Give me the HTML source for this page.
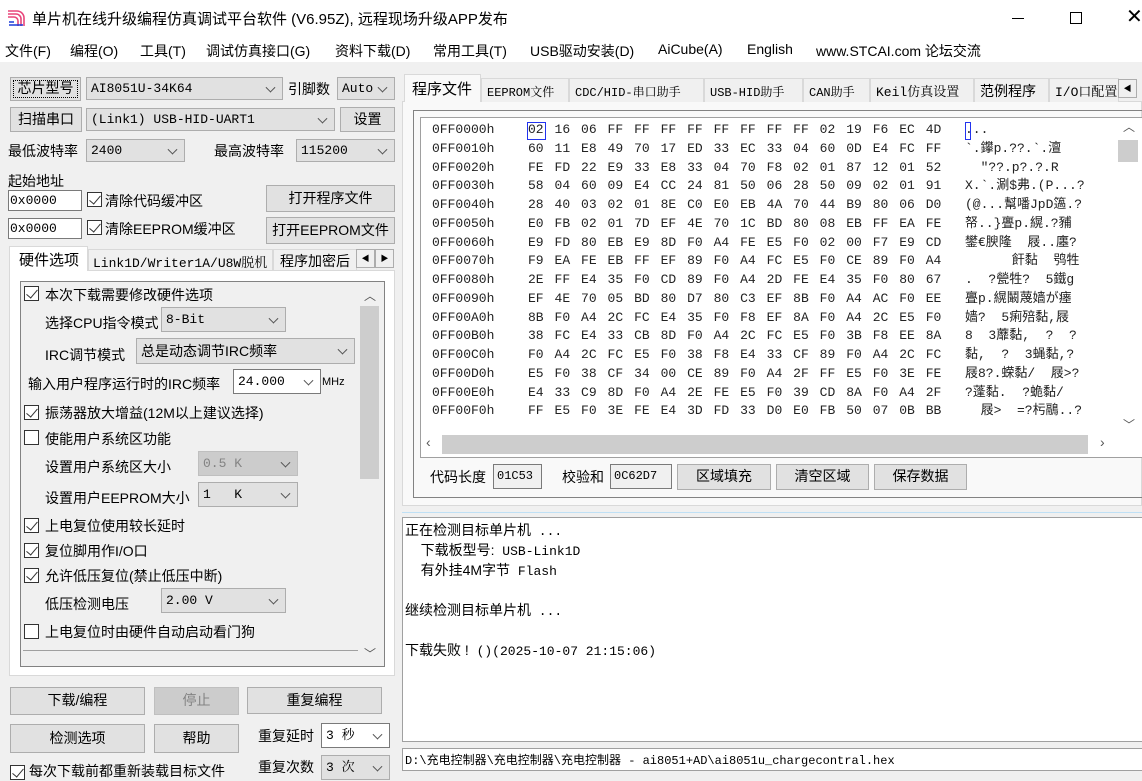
<!DOCTYPE html>
<html><head><meta charset="utf-8">
<style>
*{box-sizing:border-box;margin:0;padding:0}
body{width:1142px;height:776px;overflow:hidden;background:#f0f0f0;position:relative;font-family:"Liberation Sans","Noto Sans CJK SC",sans-serif;font-size:14px;color:#000}
.a{position:absolute;white-space:nowrap}
.btn{position:absolute;background:#e1e1e1;border:1px solid #adadad;text-align:center;font-size:14px}
.cb{position:absolute;background:#e1e1e1;border:1px solid #adadad;font-family:"Liberation Mono","Noto Serif CJK SC",monospace;font-size:13px;padding-left:4px}
.cb.w{background:#fff;border-color:#7a7a7a}
.cb.d{background:#ccc;border-color:#bfbfbf;color:#838383}
.cb:after{content:"";position:absolute;right:8px;top:50%;width:6px;height:6px;border-right:1px solid #555;border-bottom:1px solid #555;transform:translateY(-70%) rotate(45deg)}
.inp{position:absolute;background:#fff;border:1px solid #7a7a7a;font-family:"Liberation Mono",monospace;font-size:13px;padding-left:1px}
.chk{position:absolute;width:15px;height:15px;border:1px solid #333;background:#fff}
.chk.on:after{content:"";position:absolute;left:4px;top:0px;width:5px;height:10px;border-right:1.5px solid #333;border-bottom:1.5px solid #333;transform:rotate(40deg)}
.m{font-family:"Liberation Mono","Noto Serif CJK SC",monospace}
.tab{position:absolute;top:78px;height:24px;border:1px solid #d9d9d9;border-bottom:none;background:#f0f0f0;font-size:13px;padding:2px 5px 0;white-space:nowrap}
.hx{position:absolute;font-family:"Liberation Mono",monospace;font-size:13px;color:#222;white-space:pre;line-height:18.75px}
.hx span{display:inline-block;width:26.53px}
.lg div{height:20px;line-height:20px;white-space:pre;font-family:"Liberation Mono","Noto Sans CJK SC",monospace;font-size:13px}
.lg b{font-weight:normal;font-family:"Liberation Sans","Noto Sans CJK SC",sans-serif;font-size:14px}
</style></head><body>
<div class="a" style="left:0;top:0;width:1142px;height:36px;background:#fff"></div>
<svg class="a" style="left:6px;top:8px" width="20" height="20" viewBox="0 0 20 20"><g fill="none" stroke="#e8457a" stroke-width="1.6"><path d="M2 3h9a7 7 0 0 1 7 7v8"/><path d="M2 6h8a5 5 0 0 1 5 5v7"/><path d="M2 9h6a4 4 0 0 1 4 4v5"/></g><g stroke="#1c3bd8" stroke-width="1.6"><path d="M3 14h5M3 17h14"/></g></svg>
<div class="a" style="left:32px;top:8px;font-size:15px">单片机在线升级编程仿真调试平台软件 (V6.95Z), 远程现场升级APP发布</div>
<div class="a" style="left:1012px;top:18px;width:12px;height:1px;background:#000"></div>
<div class="a" style="left:1070px;top:12px;width:12px;height:12px;border:1px solid #000"></div>
<div class="a" style="left:1126px;top:4px;font-size:20px;font-weight:300">✕</div>
<div class="a" style="left:0;top:36px;width:1142px;height:26px;background:#fff"></div>
<div class="a" style="left:5px;top:41px">文件(F)</div>
<div class="a" style="left:70px;top:41px">编程(O)</div>
<div class="a" style="left:140px;top:41px">工具(T)</div>
<div class="a" style="left:206px;top:41px">调试仿真接口(G)</div>
<div class="a" style="left:335px;top:41px">资料下载(D)</div>
<div class="a" style="left:433px;top:41px">常用工具(T)</div>
<div class="a" style="left:530px;top:41px">USB驱动安装(D)</div>
<div class="a" style="left:658px;top:41px">AiCube(A)</div>
<div class="a" style="left:747px;top:41px">English</div>
<div class="a" style="left:816px;top:41px">www.STCAI.com 论坛交流</div>

<div class="btn" style="left:10px;top:77px;width:71px;height:24px;line-height:21px;outline:1px dotted #000;outline-offset:-4px">芯片型号</div>
<div class="cb" style="left:86px;top:77px;width:197px;height:23px;line-height:21px">AI8051U-34K64</div>
<div class="a" style="left:288px;top:79px">引脚数</div>
<div class="cb" style="left:337px;top:77px;width:58px;height:23px;line-height:21px">Auto</div>
<div class="btn" style="left:10px;top:107px;width:72px;height:25px;line-height:22px">扫描串口</div>
<div class="cb" style="left:86px;top:108px;width:249px;height:23px;line-height:21px">(Link1) USB-HID-UART1</div>
<div class="btn" style="left:340px;top:107px;width:55px;height:25px;line-height:22px">设置</div>
<div class="a" style="left:8px;top:141px">最低波特率</div>
<div class="cb" style="left:86px;top:139px;width:99px;height:23px;line-height:21px">2400</div>
<div class="a" style="left:214px;top:141px">最高波特率</div>
<div class="cb" style="left:296px;top:139px;width:99px;height:23px;line-height:21px">115200</div>
<div class="a" style="left:8px;top:171px">起始地址</div>
<div class="inp" style="left:8px;top:190px;width:74px;height:21px;line-height:19px">0x0000</div>
<div class="chk on" style="left:87px;top:192px"></div>
<div class="a" style="left:105px;top:191px">清除代码缓冲区</div>
<div class="btn" style="left:266px;top:185px;width:129px;height:27px;line-height:24px">打开程序文件</div>
<div class="inp" style="left:8px;top:218px;width:74px;height:21px;line-height:19px">0x0000</div>
<div class="chk on" style="left:87px;top:220px"></div>
<div class="a" style="left:105px;top:219px">清除EEPROM缓冲区</div>
<div class="btn" style="left:266px;top:217px;width:129px;height:27px;line-height:24px">打开EEPROM文件</div>
<div class="a" style="left:9px;top:270px;width:386px;height:406px;background:#fff;border:1px solid #d9d9d9"></div>
<div class="a" style="left:9px;top:246px;width:79px;height:25px;background:#fff;border:1px solid #d9d9d9;border-bottom:none;padding:2px 0 0 9px;font-size:15px">硬件选项</div>
<div class="a m" style="left:88px;top:249px;width:185px;height:22px;border:1px solid #d9d9d9;border-bottom:none;padding:2px 4px;font-size:13px">Link1D/Writer1A/U8W脱机</div>
<div class="a" style="left:273px;top:249px;width:84px;height:22px;border:1px solid #d9d9d9;border-bottom:none;padding:1px 6px;overflow:hidden">程序加密后</div>
<div class="a" style="left:356px;top:249px;width:19px;height:19px;border:1px solid #adadad;background:#f0f0f0;font-size:8px;text-align:center;line-height:17px">◀</div>
<div class="a" style="left:375px;top:249px;width:19px;height:19px;border:1px solid #adadad;background:#f0f0f0;font-size:8px;text-align:center;line-height:17px">▶</div>
<div class="a" style="left:20px;top:281px;width:365px;height:386px;border:1px solid #828282;background:#f0f0f0"></div>
<div class="a" style="left:360px;top:306px;width:19px;height:173px;background:#cdcdcd"></div>
<div class="a" style="left:364px;top:287px;font-size:12px;color:#555">︿</div>
<div class="a" style="left:364px;top:645px;font-size:12px;color:#555">﹀</div>
<div class="a" style="left:23px;top:650px;width:335px;height:1px;background:#a0a0a0"></div>
<div class="chk on" style="left:24px;top:286px"></div><div class="a" style="left:45px;top:285px">本次下载需要修改硬件选项</div>
<div class="a" style="left:45px;top:313px">选择CPU指令模式</div>
<div class="cb" style="left:161px;top:307px;width:125px;height:25px;line-height:23px">8-Bit</div>
<div class="a" style="left:45px;top:345px">IRC调节模式</div>
<div class="cb" style="left:136px;top:338px;width:219px;height:26px;line-height:24px;font-family:'Liberation Sans','Noto Sans CJK SC',sans-serif;font-size:14px">总是动态调节IRC频率</div>
<div class="a" style="left:28px;top:374px">输入用户程序运行时的IRC频率</div>
<div class="cb w" style="left:233px;top:369px;width:88px;height:25px;line-height:23px">24.000</div>
<div class="a" style="left:322px;top:376px;font-size:11px">MHz</div>
<div class="chk on" style="left:24px;top:405px"></div><div class="a" style="left:45px;top:403px">振荡器放大增益(12M以上建议选择)</div>
<div class="chk" style="left:24px;top:430px"></div><div class="a" style="left:45px;top:429px">使能用户系统区功能</div>
<div class="a" style="left:45px;top:457px">设置用户系统区大小</div>
<div class="cb d" style="left:198px;top:451px;width:100px;height:25px;line-height:23px">0.5 K</div>
<div class="a" style="left:45px;top:488px">设置用户EEPROM大小</div>
<div class="cb" style="left:198px;top:482px;width:100px;height:25px;line-height:23px">1&nbsp;&nbsp;&nbsp;K</div>
<div class="chk on" style="left:24px;top:518px"></div><div class="a" style="left:45px;top:516px">上电复位使用较长延时</div>
<div class="chk on" style="left:24px;top:543px"></div><div class="a" style="left:45px;top:541px">复位脚用作I/O口</div>
<div class="chk on" style="left:24px;top:568px"></div><div class="a" style="left:45px;top:566px">允许低压复位(禁止低压中断)</div>
<div class="a" style="left:45px;top:594px">低压检测电压</div>
<div class="cb" style="left:161px;top:588px;width:125px;height:25px;line-height:23px">2.00 V</div>
<div class="chk" style="left:24px;top:624px"></div><div class="a" style="left:45px;top:622px">上电复位时由硬件自动启动看门狗</div>
<div class="btn" style="left:10px;top:687px;width:135px;height:28px;line-height:25px">下载/编程</div>
<div class="btn" style="left:154px;top:687px;width:85px;height:28px;line-height:25px;background:#ccc;border-color:#bfbfbf;color:#838383">停止</div>
<div class="btn" style="left:247px;top:687px;width:135px;height:27px;line-height:24px">重复编程</div>
<div class="btn" style="left:10px;top:724px;width:135px;height:29px;line-height:26px">检测选项</div>
<div class="btn" style="left:154px;top:724px;width:85px;height:29px;line-height:26px">帮助</div>
<div class="a" style="left:258px;top:726px">重复延时</div>
<div class="cb w" style="left:321px;top:723px;width:69px;height:25px;line-height:23px">3 秒</div>
<div class="chk on" style="left:10px;top:765px"></div><div class="a" style="left:29px;top:761px">每次下载前都重新装载目标文件</div>
<div class="a" style="left:258px;top:757px">重复次数</div>
<div class="cb" style="left:321px;top:755px;width:69px;height:25px;line-height:23px">3 次</div>

<div class="a" style="left:402px;top:101px;width:740px;height:405px;background:#f9f9f9;border:1px solid #d9d9d9"></div>
<div class="a" style="left:404px;top:74px;width:77px;height:28px;background:#f9f9f9;border:1px solid #d9d9d9;border-bottom:none;padding:3px 0 0 7px;font-size:15px">程序文件</div>
<div class="tab m" style="left:481px;width:88px;font-size:12px;padding-top:4px">EEPROM文件</div>
<div class="tab m" style="left:569px;width:135px;font-size:12px;padding-top:4px">CDC/HID-串口助手</div>
<div class="tab m" style="left:704px;width:99px;font-size:12px;padding-top:4px">USB-HID助手</div>
<div class="tab m" style="left:803px;width:67px;font-size:12px;padding-top:4px">CAN助手</div>
<div class="tab m" style="left:870px;width:104px;font-size:13px">Keil仿真设置</div>
<div class="tab" style="left:974px;width:75px;font-size:14px">范例程序</div>
<div class="tab m" style="left:1049px;width:70px;overflow:hidden;font-size:13px">I/O口配置</div>
<div class="a" style="left:1118px;top:79px;width:19px;height:19px;border:1px solid #adadad;background:#f0f0f0;font-size:8px;text-align:center;line-height:17px">◀</div>
<div class="a" style="left:413px;top:110px;width:729px;height:388px;border:1px solid #828282;border-right:none"></div>
<div class="a" style="left:420px;top:117px;width:722px;height:341px;background:#fff;border:1px solid #a0a0a0;border-right:none"></div>
<div class="a" style="left:1118px;top:140px;width:20px;height:22px;background:#cdcdcd"></div>
<div class="a" style="left:1123px;top:118px;font-size:12px;color:#555">︿</div>
<div class="a" style="left:1123px;top:416px;font-size:12px;color:#555">﹀</div>
<div class="a" style="left:442px;top:435px;width:646px;height:19px;background:#cdcdcd"></div>
<div class="a" style="left:426px;top:434px;font-size:14px;color:#555">‹</div>
<div class="a" style="left:1100px;top:434px;font-size:14px;color:#555">›</div>
<div class="hx" style="left:432px;top:121px">0FF0000h
0FF0010h
0FF0020h
0FF0030h
0FF0040h
0FF0050h
0FF0060h
0FF0070h
0FF0080h
0FF0090h
0FF00A0h
0FF00B0h
0FF00C0h
0FF00D0h
0FF00E0h
0FF00F0h</div>
<div class="a" style="left:527px;top:122px;width:19px;height:18px;border:1px solid #2233ee"></div>
<div class="a" style="left:965px;top:122px;width:6px;height:18px;border:1px solid #2233ee"></div>
<div class="hx" style="left:528px;top:121px"><span>02</span><span>16</span><span>06</span><span>FF</span><span>FF</span><span>FF</span><span>FF</span><span>FF</span><span>FF</span><span>FF</span><span>FF</span><span>02</span><span>19</span><span>F6</span><span>EC</span><span>4D</span>
<span>60</span><span>11</span><span>E8</span><span>49</span><span>70</span><span>17</span><span>ED</span><span>33</span><span>EC</span><span>33</span><span>04</span><span>60</span><span>0D</span><span>E4</span><span>FC</span><span>FF</span>
<span>FE</span><span>FD</span><span>22</span><span>E9</span><span>33</span><span>E8</span><span>33</span><span>04</span><span>70</span><span>F8</span><span>02</span><span>01</span><span>87</span><span>12</span><span>01</span><span>52</span>
<span>58</span><span>04</span><span>60</span><span>09</span><span>E4</span><span>CC</span><span>24</span><span>81</span><span>50</span><span>06</span><span>28</span><span>50</span><span>09</span><span>02</span><span>01</span><span>91</span>
<span>28</span><span>40</span><span>03</span><span>02</span><span>01</span><span>8E</span><span>C0</span><span>E0</span><span>EB</span><span>4A</span><span>70</span><span>44</span><span>B9</span><span>80</span><span>06</span><span>D0</span>
<span>E0</span><span>FB</span><span>02</span><span>01</span><span>7D</span><span>EF</span><span>4E</span><span>70</span><span>1C</span><span>BD</span><span>80</span><span>08</span><span>EB</span><span>FF</span><span>EA</span><span>FE</span>
<span>E9</span><span>FD</span><span>80</span><span>EB</span><span>E9</span><span>8D</span><span>F0</span><span>A4</span><span>FE</span><span>E5</span><span>F0</span><span>02</span><span>00</span><span>F7</span><span>E9</span><span>CD</span>
<span>F9</span><span>EA</span><span>FE</span><span>EB</span><span>FF</span><span>EF</span><span>89</span><span>F0</span><span>A4</span><span>FC</span><span>E5</span><span>F0</span><span>CE</span><span>89</span><span>F0</span><span>A4</span>
<span>2E</span><span>FF</span><span>E4</span><span>35</span><span>F0</span><span>CD</span><span>89</span><span>F0</span><span>A4</span><span>2D</span><span>FE</span><span>E4</span><span>35</span><span>F0</span><span>80</span><span>67</span>
<span>EF</span><span>4E</span><span>70</span><span>05</span><span>BD</span><span>80</span><span>D7</span><span>80</span><span>C3</span><span>EF</span><span>8B</span><span>F0</span><span>A4</span><span>AC</span><span>F0</span><span>EE</span>
<span>8B</span><span>F0</span><span>A4</span><span>2C</span><span>FC</span><span>E4</span><span>35</span><span>F0</span><span>F8</span><span>EF</span><span>8A</span><span>F0</span><span>A4</span><span>2C</span><span>E5</span><span>F0</span>
<span>38</span><span>FC</span><span>E4</span><span>33</span><span>CB</span><span>8D</span><span>F0</span><span>A4</span><span>2C</span><span>FC</span><span>E5</span><span>F0</span><span>3B</span><span>F8</span><span>EE</span><span>8A</span>
<span>F0</span><span>A4</span><span>2C</span><span>FC</span><span>E5</span><span>F0</span><span>38</span><span>F8</span><span>E4</span><span>33</span><span>CF</span><span>89</span><span>F0</span><span>A4</span><span>2C</span><span>FC</span>
<span>E5</span><span>F0</span><span>38</span><span>CF</span><span>34</span><span>00</span><span>CE</span><span>89</span><span>F0</span><span>A4</span><span>2F</span><span>FF</span><span>E5</span><span>F0</span><span>3E</span><span>FE</span>
<span>E4</span><span>33</span><span>C9</span><span>8D</span><span>F0</span><span>A4</span><span>2E</span><span>FE</span><span>E5</span><span>F0</span><span>39</span><span>CD</span><span>8A</span><span>F0</span><span>A4</span><span>2F</span>
<span>FF</span><span>E5</span><span>F0</span><span>3E</span><span>FE</span><span>E4</span><span>3D</span><span>FD</span><span>33</span><span>D0</span><span>E0</span><span>FB</span><span>50</span><span>07</span><span>0B</span><span>BB</span></div>
<div class="hx" style="left:965px;top:121px;font-family:'Liberation Mono','Noto Sans CJK SC',monospace">...
`.鑻p.??.`.澶
  "??.p?.?.R
X.`.涮$弗.(P...?
(@...幫噃JpD簻.?
帑..}亹p.縨.?豧
鐢€腴隆  屐..廛?
      飦黏  鸮牲
.  ?甇牲?  5鐵g
亹p.縨鬫蔑嫱が瘗
嫱?  5痢殕黏,屐
8  3蘼黏,  ?  ?
黏,  ?  3蝇黏,?
屐8?.蝾黏/  屐>?
?蓬黏.  ?蛫黏/
  屐>  =?杇鷊..?</div>
<div class="a" style="left:430px;top:467px">代码长度</div>
<div class="inp m" style="left:493px;top:464px;width:49px;height:25px;line-height:23px;background:#f0f0f0;font-size:12px;padding-left:3px">01C53</div>
<div class="a" style="left:562px;top:467px">校验和</div>
<div class="inp m" style="left:610px;top:464px;width:62px;height:25px;line-height:23px;background:#f0f0f0;font-size:12px;padding-left:3px">0C62D7</div>
<div class="btn" style="left:677px;top:464px;width:94px;height:26px;line-height:23px">区域填充</div>
<div class="btn" style="left:776px;top:464px;width:93px;height:26px;line-height:23px">清空区域</div>
<div class="btn" style="left:874px;top:464px;width:93px;height:26px;line-height:23px">保存数据</div>
<div class="a" style="left:402px;top:512px;width:740px;height:1px;background:#bfe0f5"></div>
<div class="a" style="left:402px;top:517px;width:740px;height:225px;background:#fff;border:1px solid #a0a0a0;border-right:none"></div>
<div class="a lg" style="left:405px;top:520px">
<div><b>正在检测目标单片机</b> ...</div>
<div>  <b>下载板型号:</b> USB-Link1D</div>
<div>  <b>有外挂4M字节</b> Flash</div>
<div></div>
<div><b>继续检测目标单片机</b> ...</div>
<div></div>
<div><b>下载失败 !</b> ()(2025-10-07 21:15:06)</div>
</div>
<div class="a" style="left:402px;top:748px;width:740px;height:23px;background:#fff;border:1px solid #a0a0a0;border-right:none"></div>
<div class="a m" style="left:405px;top:751px;font-size:12px;font-family:'Liberation Mono','Noto Sans CJK SC',monospace">D:\充电控制器\充电控制器\充电控制器 - ai8051+AD\ai8051u_chargecontral.hex</div>
</body></html>
